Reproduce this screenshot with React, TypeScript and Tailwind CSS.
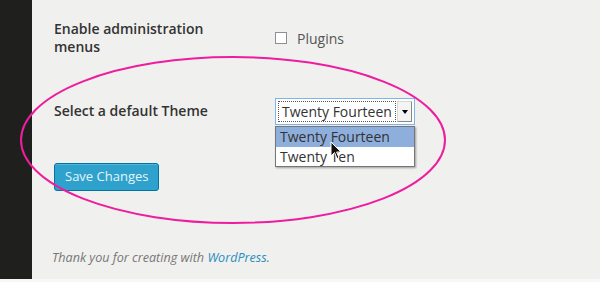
import React from 'react';

const font = { fontFamily: '"Open Sans", "Noto Sans", sans-serif' };

const Cursor = () => (
  <svg width="12" height="19" viewBox="0 0 12 19" className="absolute left-[330px] top-[141px]">
    <path d="M1 1 L1 15 L4.5 11.5 L7 17.5 L9 16.6 L6.6 11 L11 11 Z" fill="#111" stroke="#fff" strokeWidth="1" />
  </svg>
);

const App: React.FC = () => {
  return (
    <div className="relative w-[600px] h-[282px] overflow-hidden bg-[#f0f0ee]" style={font}>
      <div className="flex h-[279px]">
        <div className="w-[32px] bg-[#1f201e] shrink-0" />
        <div className="flex-1 flex flex-col pl-[22px] pt-[20px]">
          <div className="flex">
            <div className="w-[221px] text-[14px] leading-[18px] font-semibold text-[#333]">
              Enable administration<br />menus
            </div>
            <label className="flex items-center gap-[10px] pt-[8px] h-[28px] text-[14px] text-[#555]">
              <span className="w-[12px] h-[12px] border border-[#8c8f94] bg-white" />
              Plugins
            </label>
          </div>

          <div className="flex mt-[42px]">
            <div className="w-[221px] pt-[4px] text-[14px] leading-[18px] font-semibold text-[#333]">
              Select a default Theme
            </div>
            <div className="relative">
              <div className="w-[140px] h-[27px] border border-[#7eb4ea] bg-white flex items-center p-[2px]">
                <div className="flex-1 h-full border border-dotted border-[#555] flex items-center pl-[3px] text-[14px] text-[#333]">
                  Twenty Fourteen
                </div>
                <div className="w-[15px] h-[21px] border border-[#d8d8d8] border-r-[#888] border-b-[#888] bg-[#f4f4f4] flex items-center justify-center ml-[1px]">
                  <span className="w-0 h-0 border-l-[3px] border-r-[3px] border-t-[4px] border-l-transparent border-r-transparent border-t-black" />
                </div>
              </div>
              <div className="absolute left-0 top-[28px] w-[140px] bg-white border border-[#767676] shadow-[1px_1px_2px_rgba(0,0,0,0.35)] text-[14px] text-[#333]">
                <div className="h-[20px] leading-[20px] pl-[4px] bg-[#8eaedc]">Twenty Fourteen</div>
                <div className="h-[19px] leading-[19px] pl-[4px]">Twenty Ten</div>
              </div>
            </div>
          </div>

          <div className="mt-[38px]">
            <button className="h-[28px] px-[10px] rounded-[3px] bg-[#2ea2cc] border border-[#0074a2] text-[13px] text-[#e6f5fb] shadow-[inset_0_1px_0_rgba(120,200,230,0.5)]">
              Save Changes
            </button>
          </div>

          <p className="mt-[58px] -ml-[2px] text-[12.6px] italic text-[#777]">
            Thank you for creating with <span className="text-[#2a8ebd]">WordPress</span>.
          </p>
        </div>
      </div>
      <div className="h-[3px] bg-[#f8f8f8]" />

      <svg className="absolute left-0 top-0 pointer-events-none" width="600" height="282">
        <ellipse cx="233" cy="140" rx="212" ry="83" fill="none" stroke="#ee1c9e" strokeWidth="2" />
      </svg>
      <Cursor />
    </div>
  );
};

export default App;
